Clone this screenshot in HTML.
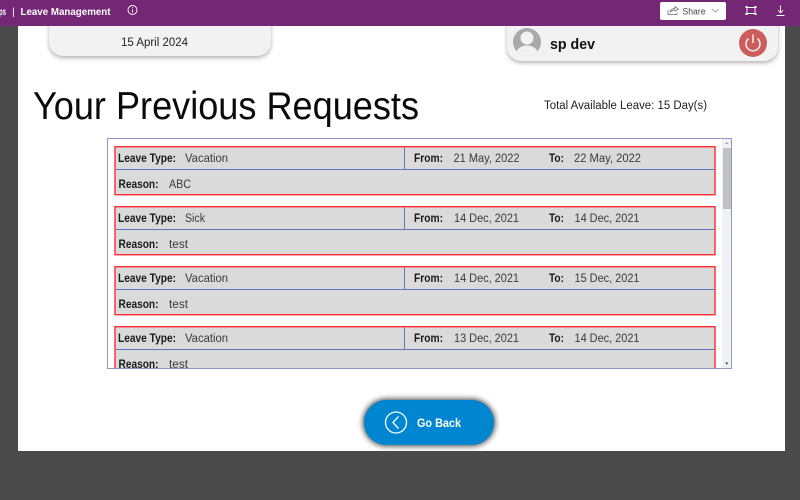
<!DOCTYPE html>
<html><head><meta charset="utf-8"><style>
html,body{margin:0;padding:0;width:800px;height:500px;overflow:hidden;background:#4a4a4a}
.a{position:absolute;box-sizing:border-box}
svg{position:absolute;left:0;top:0}
text{font-family:"Liberation Sans",sans-serif}
.b{font-weight:bold;fill:#1a1a1a;font-size:11.5px}
.n{fill:#3a3a3a;font-size:11.5px}
</style></head><body>
<div class="a" style="left:18px;top:25px;width:767px;height:425.500px;background:#fff"></div>
<div class="a" style="left:0;top:0;width:800px;height:25.500px;background:#742774"></div>
<div class="a" style="left:49px;top:20px;width:222px;height:36px;background:#f2f2f2;border-radius:0 0 14px 14px;box-shadow:0 2px 4px rgba(0,0,0,.3);clip-path:inset(6px -8px -8px -8px)"></div>
<div class="a" style="left:507px;top:20px;width:271px;height:41px;background:#f2f2f2;border-radius:0 0 14px 14px;box-shadow:0 2px 4px rgba(0,0,0,.3);clip-path:inset(6px -8px -8px -8px)"></div>
<div class="a" style="left:660px;top:2px;width:66px;height:18px;background:#fff;border-radius:2px"></div>
<div class="a" style="left:106.500px;top:138px;width:625px;height:231px;background:#fff;border:1px solid #8e98c8"></div>
<div class="a" style="left:722px;top:139px;width:9px;height:229px;background:#f1f1f1"></div>
<div class="a" style="left:723px;top:148px;width:8px;height:61px;background:#c1c1c1"></div>
<div class="a" style="left:364px;top:400px;width:130px;height:45px;background:#0086d1;border-radius:23px;box-shadow:0 0 6px 1px rgba(0,0,0,.75)"></div>
<svg width="800" height="500" viewBox="0 0 800 500">
<defs>
<clipPath id="c"><rect x="107.500" y="139" width="614.500" height="229"/></clipPath>
<g id="r">
<rect x="115" y="146.700" width="600" height="48" fill="#dadada" stroke="#ff2a33" stroke-width="1.400"/>
<path d="M116 169.500H714.500M404.500 147.500V169.500" fill="none" stroke="#5a78c4" stroke-width="1"/>
<text class="b" x="118" y="162" textLength="58" lengthAdjust="spacingAndGlyphs">Leave Type:</text>
<text class="b" x="414" y="162" textLength="29" lengthAdjust="spacingAndGlyphs">From:</text>
<text class="b" x="549" y="162" textLength="15" lengthAdjust="spacingAndGlyphs">To:</text>
<text class="b" x="118.500" y="188" textLength="40" lengthAdjust="spacingAndGlyphs">Reason:</text>
</g>
</defs>

<text x="-1" y="15" fill="#fff" font-size="10.500" font-weight="bold" textLength="7" lengthAdjust="spacingAndGlyphs">ps</text>
<text x="12" y="15" fill="#fff" font-size="10.500">|</text>
<text x="20.500" y="15" fill="#fff" font-size="10.500" font-weight="bold" textLength="90" lengthAdjust="spacingAndGlyphs">Leave Management</text>
<circle cx="132.500" cy="10" r="4.500" fill="none" stroke="#fff" stroke-width=".9"/>
<path d="M132.500 9.500V12.800M132.500 7.200V8.200" stroke="#fff" stroke-width=".9"/>

<path d="M668 10V14.500H677V12.500M670 12C670.500 9.800 672.500 8.500 675 8.500V6.500L678.500 9.300L675 11V10C673 10 671.500 10.700 670 12Z" fill="none" stroke="#666" stroke-width=".7"/>
<text x="682.500" y="14.500" fill="#444" font-size="9.500" textLength="23" lengthAdjust="spacingAndGlyphs">Share</text>
<path d="M712 9L715.500 12L719 9" fill="none" stroke="#888" stroke-width=".7"/>
<path d="M746.500 7.500H755M746.500 13.500H755M747 7V14M755 7V14" stroke="#fff" fill="none" stroke-width=".9"/>
<path d="M745.500 6H747.500V8H745.500ZM754.500 6H756.500V8H754.500ZM745.500 13H747.500V15H745.500ZM754.500 13H756.500V15H754.500Z" fill="#fff"/>
<path d="M780.500 5.500V12.500M778 10.200L780.500 12.800L783 10.200M776.500 15.500H784.500" fill="none" stroke="#fff" stroke-width=".9"/>

<text x="121" y="46" fill="#222" font-size="11.500" textLength="67" lengthAdjust="spacingAndGlyphs">15 April 2024</text>

<circle cx="527" cy="42" r="14" fill="#a9a9a9"/>
<clipPath id="av"><circle cx="527" cy="42" r="14"/></clipPath>
<g clip-path="url(#av)" fill="#f2f2f2"><circle cx="527" cy="38" r="6.500"/><ellipse cx="527" cy="54" rx="11" ry="8.500"/></g>
<text x="550" y="49" fill="#111" font-size="15" font-weight="bold" textLength="45" lengthAdjust="spacingAndGlyphs">sp dev</text>
<circle cx="753" cy="43" r="14" fill="#cd5c5c"/>
<path d="M748.500 38.500A7 7 0 1 0 757.500 38.500M753 34.500V43" fill="none" stroke="#f6f0f0" stroke-width="1.500"/>

<text x="33" y="119" fill="#0a0a0a" font-size="39" textLength="386" lengthAdjust="spacingAndGlyphs">Your Previous Requests</text>
<text x="544" y="109" fill="#222" font-size="11.500" textLength="163" lengthAdjust="spacingAndGlyphs">Total Available Leave: 15 Day(s)</text>

<g clip-path="url(#c)">
<use href="#r"/>
<text class="n" x="185" y="162" textLength="43" lengthAdjust="spacingAndGlyphs">Vacation</text>
<text class="n" x="453.500" y="162" textLength="66" lengthAdjust="spacingAndGlyphs">21 May, 2022</text>
<text class="n" x="574" y="162" textLength="67" lengthAdjust="spacingAndGlyphs">22 May, 2022</text>
<text class="n" x="169" y="188" textLength="22" lengthAdjust="spacingAndGlyphs">ABC</text>

<g transform="translate(0,60)"><use href="#r"/>
<text class="n" x="185" y="162" textLength="20" lengthAdjust="spacingAndGlyphs">Sick</text>
<text class="n" x="454" y="162" textLength="65" lengthAdjust="spacingAndGlyphs">14 Dec, 2021</text>
<text class="n" x="574.500" y="162" textLength="65" lengthAdjust="spacingAndGlyphs">14 Dec, 2021</text>
<text class="n" x="169" y="188" textLength="19" lengthAdjust="spacingAndGlyphs">test</text></g>

<g transform="translate(0,120)"><use href="#r"/>
<text class="n" x="185" y="162" textLength="43" lengthAdjust="spacingAndGlyphs">Vacation</text>
<text class="n" x="454" y="162" textLength="65" lengthAdjust="spacingAndGlyphs">14 Dec, 2021</text>
<text class="n" x="574.500" y="162" textLength="65" lengthAdjust="spacingAndGlyphs">15 Dec, 2021</text>
<text class="n" x="169" y="188" textLength="19" lengthAdjust="spacingAndGlyphs">test</text></g>

<g transform="translate(0,180)"><use href="#r"/>
<text class="n" x="185" y="162" textLength="43" lengthAdjust="spacingAndGlyphs">Vacation</text>
<text class="n" x="454" y="162" textLength="65" lengthAdjust="spacingAndGlyphs">13 Dec, 2021</text>
<text class="n" x="574.500" y="162" textLength="65" lengthAdjust="spacingAndGlyphs">14 Dec, 2021</text>
<text class="n" x="169" y="188" textLength="19" lengthAdjust="spacingAndGlyphs">test</text></g>
</g>
<path d="M725.200 144L726.800 141.800L728.400 144Z" fill="#aaa"/>
<path d="M725.200 362.500L726.800 364.700L728.400 362.500Z" fill="#444"/>

<circle cx="396" cy="422.500" r="10.500" fill="none" stroke="#fff" stroke-width="1.300"/>
<path d="M398.500 416.500L393 422.500L398.500 428.500" fill="none" stroke="#fff" stroke-width="1.300"/>
<text x="417" y="427" fill="#fff" font-size="12" font-weight="bold" textLength="44" lengthAdjust="spacingAndGlyphs">Go Back</text>
</svg>
</body></html>
